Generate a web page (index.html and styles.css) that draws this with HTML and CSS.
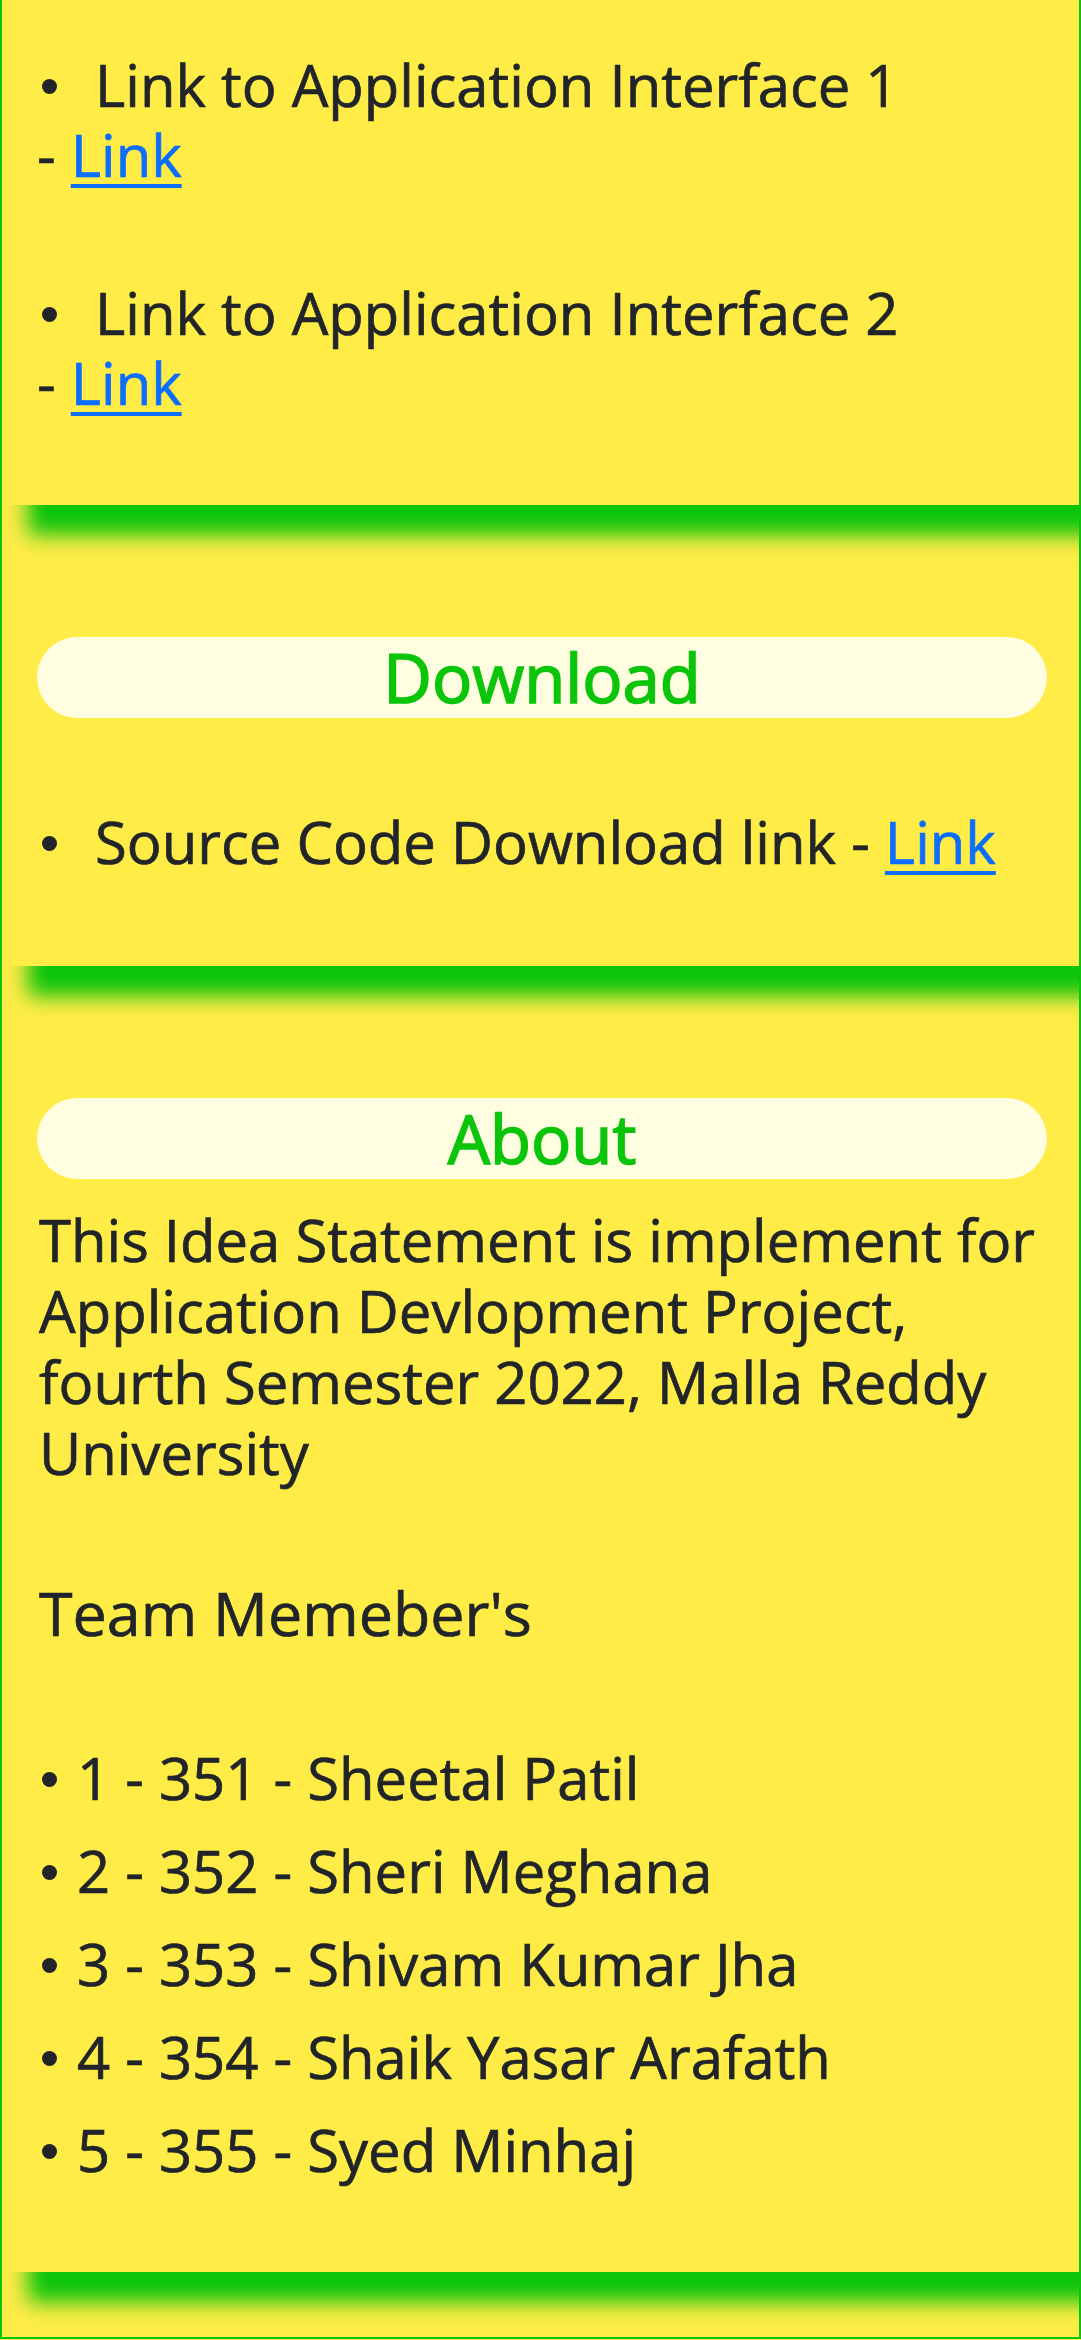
FILE: index.html
```html
<!DOCTYPE html>
<html lang="en">
<head>
<meta charset="utf-8">
<title>Application Interface</title>
<link rel="stylesheet" href="styles.css">
</head>
<body>
<div class="page">
  <section class="card card-links">
    <ul class="items">
      <li><span class="dot"></span>Link to Application Interface 1 <span class="tail">- <a href="#">Link</a></span></li>
      <li><span class="dot"></span>Link to Application Interface 2 <span class="tail">- <a href="#">Link</a></span></li>
    </ul>
  </section>
  <section class="card card-download">
    <h2 class="pill">Download</h2>
    <ul class="items items-download">
      <li><span class="dot"></span>Source Code Download link <span class="tail">- <a href="#">Link</a></span></li>
    </ul>
  </section>
  <section class="card card-about">
    <h2 class="pill">About</h2>
    <p class="about">This Idea Statement is implement for Application Devlopment Project, fourth Semester 2022, Malla Reddy University</p>
    <h3 class="team">Team Memeber's</h3>
    <ul class="members">
      <li><span class="dot dot-s"></span>1 - 351 - Sheetal Patil</li>
      <li><span class="dot dot-s"></span>2 - 352 - Sheri Meghana</li>
      <li><span class="dot dot-s"></span>3 - 353 - Shivam Kumar Jha</li>
      <li><span class="dot dot-s"></span>4 - 354 - Shaik Yasar Arafath</li>
      <li><span class="dot dot-s"></span>5 - 355 - Syed Minhaj</li>
    </ul>
  </section>
</div>
</body>
</html>
```

FILE: styles.css
```css
* { box-sizing: border-box; }
html, body { margin: 0; padding: 0; }
body {
  background: #ffec47;
  font-family: "Open Sans", "Noto Sans", sans-serif;
  color: #212529;
  -webkit-text-stroke: 0.7px currentColor;
}
.page {
  border: 2px solid #0bc50b;
  border-top: 0;
  background: #ffec47;
  overflow: hidden;
  padding-bottom: 65px;
}
.card {
  box-shadow: 26px 30px 20px #0bc50b;
  padding: 132px 32px 0 35px;
}
.card-links { padding-top: 50px; padding-bottom: 87px; }
.card-download { padding-bottom: 89px; }
.card-about { padding-bottom: 76px; }

.items, .members {
  list-style: none;
  margin: 0;
  padding: 0;
}
.items li {
  font-size: 58px;
  line-height: 70px;
}
.items li + li { margin-top: 88px; }
.items-download { margin-top: 89px; }
.tail { white-space: nowrap; }
.dot {
  display: inline-block;
  width: 15px;
  height: 15px;
  border-radius: 50%;
  background: #212529;
  margin: 0 38px 0 5px;
  vertical-align: 13px;
}
.dot-s { margin-right: 20px; }
a { color: #0d6efd; text-decoration: underline; text-decoration-thickness: 4px; text-underline-offset: 7px; }

.pill {
  margin: 0;
  height: 81px;
  border-radius: 41px;
  background: #fffee0;
  color: #0bc50b;
  text-align: center;
  font-size: 67px;
  line-height: 81px;
  font-weight: 400;
  -webkit-text-stroke: 1.6px currentColor;
}
.about {
  margin: 25px 0 0;
  padding-left: 2px;
  font-size: 58px;
  line-height: 71px;
}
.team {
  margin: 87px 0 0;
  padding-left: 2px;
  font-size: 61px;
  line-height: 75px;
  font-weight: 400;
}
.members { margin-top: 81px; }
.members li {
  font-size: 58px;
  line-height: 93px;
}
```
